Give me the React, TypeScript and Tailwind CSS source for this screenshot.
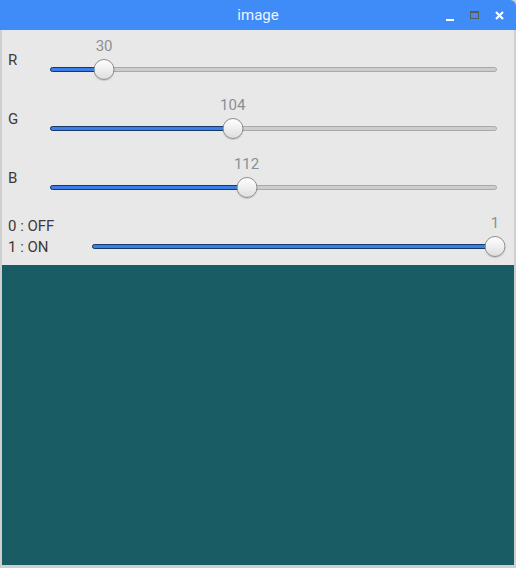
import React from "react";

type SliderProps = {
  value: number;
  max: number;
};

function Slider({ value, max }: SliderProps) {
  const pct = max === 0 ? 0 : value / max;
  // thumb travels 2px inside each end of the track
  const left = `calc(2px + (100% - 4px) * ${pct})`;
  return (
    <div className="relative h-full">
      {/* value above thumb */}
      <div
        className="absolute top-[6px] -translate-x-1/2 text-[15px] leading-[20px] text-[#8a8f96]"
        style={{ left }}
      >
        {value}
      </div>
      {/* track */}
      <div className="absolute left-0 right-0 top-[37px] h-[5px] rounded-full border border-[#a9a9a9] bg-[#cdcdcd]" />
      <div
        className="absolute left-0 top-[37px] h-[5px] rounded-full border border-[#17396a] bg-[#3a7ee6]"
        style={{ width: left }}
      />
      {/* thumb */}
      <div
        className="absolute top-[29px] h-[21px] w-[21px] -translate-x-1/2 rounded-full border border-[#8e8e8e] bg-gradient-to-b from-[#ffffff] to-[#dedede] shadow-[0_1px_1px_rgba(0,0,0,0.15)]"
        style={{ left }}
      />
    </div>
  );
}

function Row({ label, value, max }: { label: string; value: number; max: number }) {
  return (
    <div className="flex h-[59px]">
      <div className="w-[48px] pl-[6px] pt-[19px] text-[15px] leading-[22px] text-[#3f3a35]">
        {label}
      </div>
      <div className="flex-1 pr-[17px]">
        <Slider value={value} max={max} />
      </div>
    </div>
  );
}

export default function App() {
  const r = 30;
  const g = 104;
  const b = 112;
  const on = 1;

  return (
    <div
      className="flex h-[568px] w-[516px] flex-col overflow-hidden bg-[#cfcfcf]"
      style={{ fontFamily: "Roboto, 'Liberation Sans', sans-serif" }}
    >
      {/* Title bar */}
      <div className="relative flex h-[30px] shrink-0 items-center justify-center rounded-tr-[6px] bg-[#3f8bf8]">
        <span className="text-[15px] text-[#eef4ff]">image</span>
        <div className="absolute right-[12px] top-0 flex h-[30px] items-center gap-[16px]">
          <div className="mt-[9px] h-[2px] w-[8px] bg-white" />
          <div className="h-[8px] w-[9px] border border-t-2 border-[#5a5a5a]" />
          <svg width="9" height="9" viewBox="0 0 9 9">
            <path d="M1 1 L8 8 M8 1 L1 8" stroke="#ffffff" strokeWidth="2.2" />
          </svg>
        </div>
      </div>

      {/* Body */}
      <div className="mx-[2px] mb-[3px] flex flex-1 flex-col bg-[#e8e8e8]">
        <Row label="R" value={r} max={255} />
        <Row label="G" value={g} max={255} />
        <Row label="B" value={b} max={255} />

        {/* Switch row */}
        <div className="flex h-[58px]">
          <div className="w-[90px] pl-[6px] pt-[9px] text-[15px] leading-[21px] text-[#3f3a35]">
            <div>0 : OFF</div>
            <div>1 : ON</div>
          </div>
          <div className="flex-1 pr-[17px]">
            <Slider value={on} max={1} />
          </div>
        </div>

        {/* Image */}
        <div className="flex-1 bg-[#1a5c63]" />
      </div>
    </div>
  );
}
